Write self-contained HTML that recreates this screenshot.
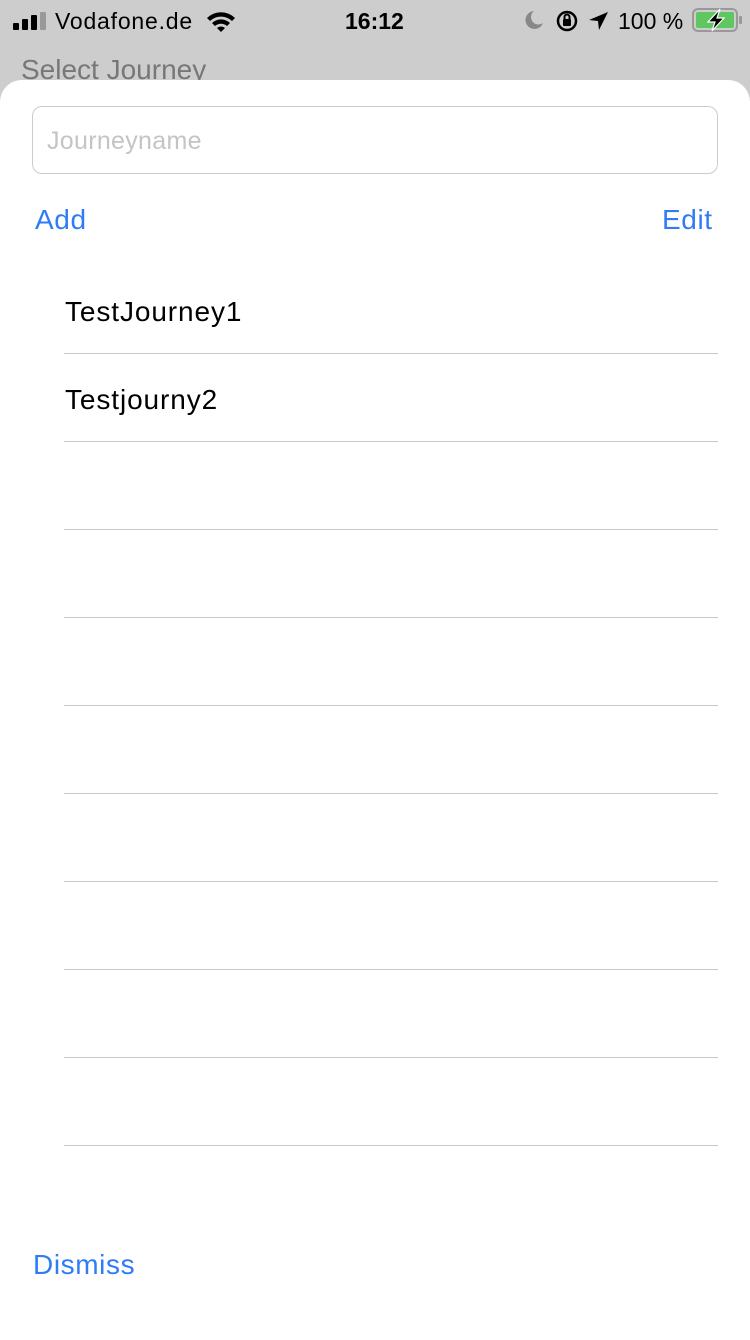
<!DOCTYPE html>
<html><head><meta charset="utf-8"><style>
*{margin:0;padding:0;box-sizing:border-box}
body{width:750px;height:1334px;background:#cdcdcd;font-family:"Liberation Sans",sans-serif;position:relative;overflow:hidden}
.sb{position:absolute;top:0;left:0;width:750px;height:40px;font-size:23px;color:#000}
.t{position:absolute;top:8px}
.title{position:absolute;left:21px;top:54px;font-size:28px;color:#777}
.sheet{position:absolute;top:80px;left:0;width:750px;height:1260px;background:#fff;border-radius:22px 22px 0 0}
.inp{position:absolute;left:32px;top:26px;width:686px;height:68px;border:1px solid #ccc;border-radius:10px;font-size:25px;color:#c4c4c8;padding:20px 0 0 14px;letter-spacing:0.3px}
.blue{color:#2f7cf6;font-size:28px;position:absolute;letter-spacing:0.6px}
.row{position:absolute;left:64px;width:654px;border-bottom:1px solid #c8c8cc;height:88px}
.row span{position:absolute;left:1px;top:30px;font-size:28px;color:#000;letter-spacing:0.9px}
</style></head><body>
<div class="sb">
<svg style="position:absolute;left:13px;top:12px" width="36" height="18"><rect x="0" y="11" width="6" height="7" rx="1"/><rect x="9" y="7" width="6" height="11" rx="1"/><rect x="18" y="3" width="6" height="15" rx="1"/><rect x="27" y="0" width="6" height="18" rx="1" fill="#999"/></svg>
<span class="t" style="left:55px;letter-spacing:0.8px">Vodafone.de</span>
<svg style="position:absolute;left:205px;top:9px" width="32" height="24" viewBox="0 0 32 24"><path d="M2 9a20 20 0 0 1 28 0l-3 3a16 16 0 0 0-22 0z M7 14a13 13 0 0 1 18 0l-3 3a9 9 0 0 0-12 0z M12 19a6 6 0 0 1 8 0l-4 4z"/></svg>
<span class="t" style="left:345px;font-weight:bold">16:12</span>
<svg style="position:absolute;left:524px;top:10px" width="20" height="20"><path d="M10 1a9 9 0 1 0 9 12a7 7 0 0 1-9-12z" fill="#888"/></svg>
<svg style="position:absolute;left:555px;top:9px" width="24" height="24"><circle cx="12" cy="12" r="9" fill="none" stroke="#000" stroke-width="2.5"/><rect x="8" y="10" width="8" height="7" rx="1"/><path d="M9.5 10v-2a2.5 2.5 0 0 1 5 0v2" fill="none" stroke="#000" stroke-width="2"/></svg>
<svg style="position:absolute;left:588px;top:10px" width="22" height="22"><path d="M20 2L1 10l9 1 1 9z"/></svg>
<span class="t" style="left:618px">100 %</span>
<svg style="position:absolute;left:692px;top:8px" width="56" height="24"><rect x="1" y="1" width="44" height="22" rx="5" fill="none" stroke="#999" stroke-width="2"/><rect x="4" y="4" width="38" height="16" rx="2" fill="#5fc75f"/><rect x="47" y="8" width="3" height="8" rx="1" fill="#999"/><path d="M28 1l-12 13h7l-3 9 12-13h-7z" fill="#000" stroke="#fff" stroke-width="1.2"/></svg>
</div>
<div class="title">Select Journey</div>
<div class="sheet">
<div class="inp">Journeyname</div>
<div class="blue" style="left:35px;top:124px">Add</div>
<div class="blue" style="left:662px;top:124px">Edit</div>
<div class="row" style="top:186px"><span>TestJourney1</span></div>
<div class="row" style="top:274px"><span>Testjourny2</span></div>
<div class="row" style="top:362px"></div>
<div class="row" style="top:450px"></div>
<div class="row" style="top:538px"></div>
<div class="row" style="top:626px"></div>
<div class="row" style="top:714px"></div>
<div class="row" style="top:802px"></div>
<div class="row" style="top:890px"></div>
<div class="row" style="top:978px"></div>
<div class="blue" style="left:33px;top:1169px">Dismiss</div>
</div>
</body></html>
